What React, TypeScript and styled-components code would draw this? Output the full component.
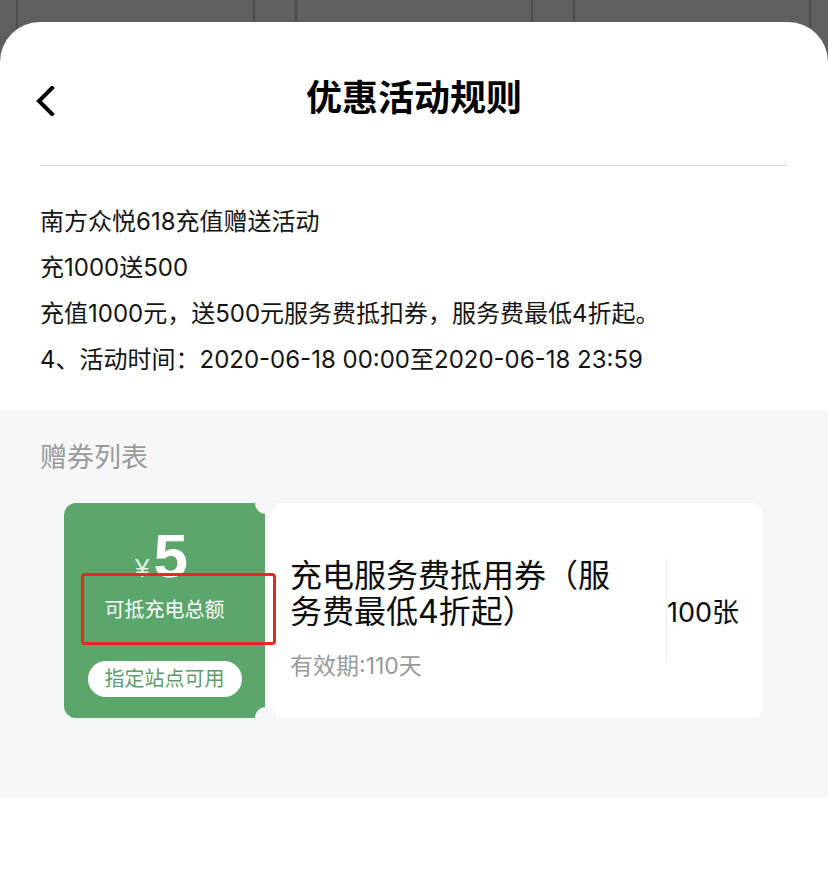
import React from "react";
import styled, { createGlobalStyle } from "styled-components";

const GlobalStyle = createGlobalStyle`
  html, body { margin: 0; padding: 0; }
  body {
    background-color: #5f5f5f;
    background-image:
      linear-gradient(#4c4c4c, #4c4c4c),
      linear-gradient(#4c4c4c, #4c4c4c),
      linear-gradient(#4c4c4c, #4c4c4c),
      linear-gradient(#4c4c4c, #4c4c4c),
      linear-gradient(#4c4c4c, #4c4c4c),
      linear-gradient(#4c4c4c, #4c4c4c);
    background-size: 2px 100%;
    background-repeat: no-repeat;
    background-position: 16px 0, 253px 0, 295px 0, 531px 0, 573px 0, 809px 0;
    font-family: "Inter", "Noto Sans CJK SC", "Noto Sans", sans-serif;
    -webkit-font-smoothing: antialiased;
  }
`;

const Sheet = styled.div`
  margin-top: 22px;
  background: #ffffff;
  border-radius: 40px 40px 0 0;
  min-height: 851px;
  display: flex;
  flex-direction: column;
`;

const Header = styled.div`
  display: grid;
  grid-template-columns: 80px 1fr 80px;
  align-items: start;
  padding: 48px 36px 0;
  height: 95px;
  box-sizing: content-box;
`;

const BackButton = styled.div`
  display: flex;
  margin-top: 16px;
  height: 30px;
`;

const Title = styled.h1`
  margin: 0;
  text-align: center;
  font-family: "Noto Sans CJK SC", sans-serif;
  font-size: 36px;
  line-height: 50px;
  font-weight: 700;
  color: #000;
`;

const Divider = styled.div`
  margin: 0 40px;
  height: 1px;
  background: #dcdcdc;
`;

const Rules = styled.div`
  padding: 33px 40px 27px;
  font-size: 24px;
  line-height: 46px;
  color: #141414;
`;

const RuleLine = styled.p`
  margin: 0;
`;

const GraySection = styled.div`
  background: #f5f6f8;
  padding: 29px 65px 80px 40px;
`;

const SectionTitle = styled.h2`
  margin: 0 0 26px;
  font-size: 27px;
  line-height: 38px;
  font-weight: 400;
  color: #9a9a9a;
`;

const Coupon = styled.div`
  position: relative;
  margin-left: 24px;
  display: flex;
  height: 215px;
  gap: 3px;

  &::before,
  &::after {
    content: "";
    position: absolute;
    left: 191px;
    width: 22px;
    height: 22px;
    border-radius: 50%;
    background: #f5f6f8;
  }
  &::before { top: -11px; }
  &::after { bottom: -11px; }
`;

const Stub = styled.div`
  width: 201px;
  flex-shrink: 0;
  background: #5ba66b;
  border-radius: 12px 0 0 12px;
  display: flex;
  flex-direction: column;
  align-items: center;
  padding-top: 22px;
  box-sizing: border-box;
  color: #fff;
`;

const Amount = styled.div`
  display: flex;
  align-items: baseline;
  height: 62px;
  margin-left: -6px;
`;

const Currency = styled.span`
  font-family: "Liberation Sans", "Noto Sans CJK SC", sans-serif;
  font-size: 26px;
  line-height: 62px;
  color: rgba(255, 255, 255, 0.85);
  margin-right: 4px;
`;

const AmountValue = styled.span`
  font-family: "Liberation Sans", Arial, sans-serif;
  font-size: 62px;
  line-height: 62px;
  font-weight: 700;
`;

const StubLabel = styled.div`
  margin-top: 9px;
  font-size: 20px;
  line-height: 28px;
`;

const Pill = styled.div`
  margin-top: 37px;
  height: 36px;
  width: 154px;
  border-radius: 18px;
  background: #fff;
  color: #5e9d6a;
  font-size: 20px;
  line-height: 36px;
  text-align: center;
`;

const Body = styled.div`
  flex: 1;
  background: #fff;
  border-radius: 0 12px 12px 0;
  display: flex;
`;

const Info = styled.div`
  flex: 1;
  padding: 55px 40px 0 22px;
`;

const CouponName = styled.div`
  font-size: 32px;
  line-height: 36px;
  color: #0d0d0d;
`;

const Validity = styled.div`
  margin-top: 21px;
  font-size: 23px;
  line-height: 30px;
  color: #999;
`;

const Count = styled.div`
  align-self: center;
  width: 97px;
  height: 103px;
  box-sizing: border-box;
  border-left: 1px solid #eeeeee;
  display: flex;
  align-items: center;
  font-size: 27px;
  color: #0d0d0d;
`;

const Highlight = styled.div`
  position: absolute;
  left: 17px;
  top: 70px;
  width: 195px;
  height: 72px;
  box-sizing: border-box;
  border: 3px solid #e8262b;
  border-radius: 4px;
  pointer-events: none;
`;

const BottomArea = styled.div`
  flex: 1;
  background: #fff;
`;

export default function App() {
  return (
    <>
      <GlobalStyle />
      <Sheet>
        <Header>
          <BackButton>
            <svg width="20" height="30" viewBox="0 0 20 30" fill="none">
              <polyline
                points="16,2 3,15 16,28"
                stroke="#000"
                strokeWidth="4"
                strokeLinecap="square"
                strokeLinejoin="miter"
              />
            </svg>
          </BackButton>
          <Title>优惠活动规则</Title>
          <div />
        </Header>
        <Divider />
        <Rules>
          <RuleLine>南方众悦618充值赠送活动</RuleLine>
          <RuleLine>充1000送500</RuleLine>
          <RuleLine>充值1000元，送500元服务费抵扣券，服务费最低4折起。</RuleLine>
          <RuleLine>4、活动时间：2020-06-18 00:00至2020-06-18 23:59</RuleLine>
        </Rules>
        <GraySection>
          <SectionTitle>赠券列表</SectionTitle>
          <Coupon>
            <Stub>
              <Amount>
                <Currency>¥</Currency>
                <AmountValue>5</AmountValue>
              </Amount>
              <StubLabel>可抵充电总额</StubLabel>
              <Pill>指定站点可用</Pill>
            </Stub>
            <Body>
              <Info>
                <CouponName>充电服务费抵用券（服务费最低4折起）</CouponName>
                <Validity>有效期:110天</Validity>
              </Info>
              <Count>100张</Count>
            </Body>
            <Highlight />
          </Coupon>
        </GraySection>
        <BottomArea />
      </Sheet>
    </>
  );
}
